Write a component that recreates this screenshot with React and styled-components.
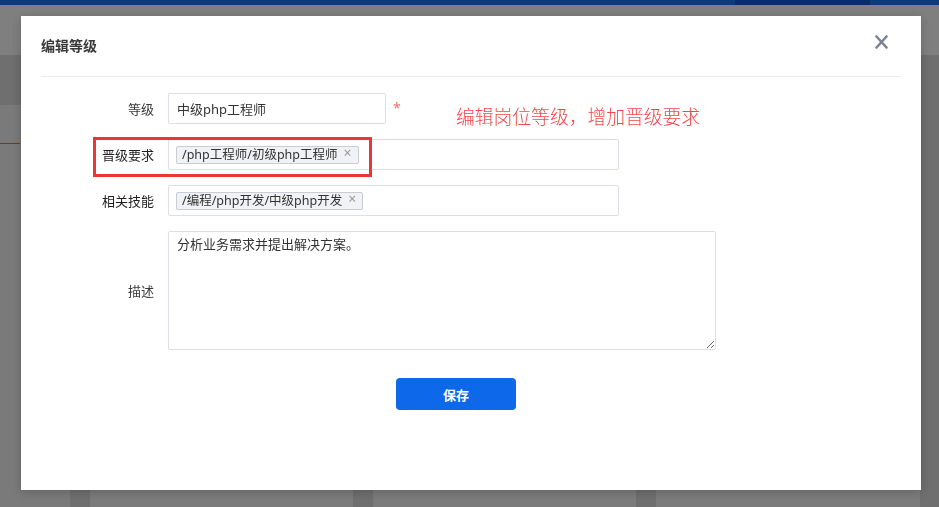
import React from "react";
import styled, { createGlobalStyle } from "styled-components";

const GlobalStyle = createGlobalStyle`
  html, body {
    margin: 0;
    padding: 0;
    width: 939px;
    height: 507px;
    overflow: hidden;
  }
  body {
    font-family: "Noto Sans", "Noto Sans CJK SC", sans-serif;
    color: #333;
  }
  * {
    box-sizing: border-box;
  }
`;

function App() {
  return (
    <>
      <GlobalStyle />
      <Page>
        <TopBar>
          <TopBarAccent />
        </TopBar>
        <Header />
        <Main>
          <Sidebar>
            <SideTabs />
            <SideMenu>
              <ActiveLine />
            </SideMenu>
          </Sidebar>
          <Content>
            <CardRow>
              <Card />
              <Card />
              <Card />
            </CardRow>
          </Content>
        </Main>
      </Page>

      <Overlay>
        <Dialog>
          <DialogHeader>
            <Title>编辑等级</Title>
            <CloseButton>
              <svg width="13" height="14" viewBox="0 0 13 14">
                <path
                  d="M1.5 1.5 L11.5 12.5 M11.5 1.5 L1.5 12.5"
                  stroke="#7c8394"
                  strokeWidth="2.6"
                  strokeLinecap="round"
                />
              </svg>
            </CloseButton>
          </DialogHeader>

          <Form>
            <Row>
              <Label>等级</Label>
              <Field $width={218}>中级php工程师</Field>
              <Required>*</Required>
            </Row>
            <Row>
              <Label $strong>晋级要求</Label>
              <TagField $width={451}>
                <Tag>
                  /php工程师/初级php工程师
                  <TagClose>×</TagClose>
                </Tag>
              </TagField>
            </Row>
            <Row>
              <Label $strong>相关技能</Label>
              <TagField $width={451}>
                <Tag>
                  /编程/php开发/中级php开发
                  <TagClose>×</TagClose>
                </Tag>
              </TagField>
            </Row>
            <Row>
              <Label>描述</Label>
              <TextArea readOnly defaultValue="分析业务需求并提出解决方案。" />
            </Row>
          </Form>

          <Footer>
            <SaveButton>保存</SaveButton>
          </Footer>

          <MarkBox />
          <MarkNote>编辑岗位等级，增加晋级要求</MarkNote>
        </Dialog>
      </Overlay>
    </>
  );
}

export default App;

/* page behind the modal */

const Page = styled.div`
  width: 939px;
  height: 507px;
  display: flex;
  flex-direction: column;
  background: #dedede;
`;

const TopBar = styled.div`
  height: 5px;
  background: #1a74f2;
  display: flex;
  justify-content: flex-end;
  padding-right: 69px;
`;

const TopBarAccent = styled.div`
  width: 135px;
  height: 100%;
  background: #0f58d0;
`;

const Header = styled.div`
  height: 50px;
  background: #fff;
`;

const Main = styled.div`
  flex: 1;
  display: flex;
`;

const Sidebar = styled.div`
  width: 71px;
  display: flex;
  flex-direction: column;
`;

const SideTabs = styled.div`
  height: 50px;
  background: #dedede;
`;

const SideMenu = styled.div`
  flex: 1;
  background: #f5f5f5;
  padding-top: 38px;
`;

const ActiveLine = styled.div`
  width: 20px;
  height: 1px;
  background: #e07a2a;
`;

const Content = styled.div`
  flex: 1;
  display: flex;
  flex-direction: column;
  justify-content: flex-end;
  padding: 0 19px 0 20px;
`;

const CardRow = styled.div`
  height: 330px;
  display: grid;
  grid-template-columns: 263px 263px 264px;
  gap: 20px;
`;

const Card = styled.div`
  background: #f6f6f6;
`;

/* modal */

const Overlay = styled.div`
  position: fixed;
  inset: 0;
  background: rgba(0, 0, 0, 0.5);
  padding: 16px 0 0 21px;
`;

const Dialog = styled.div`
  position: relative;
  width: 900px;
  height: 474px;
  background: #fff;
  box-shadow: 0 2px 10px rgba(0, 0, 0, 0.2);
`;

const DialogHeader = styled.div`
  height: 61px;
  margin: 0 20px;
  padding-top: 19px;
  border-bottom: 1px solid #ececec;
  display: flex;
  justify-content: space-between;
  align-items: flex-start;
`;

const Title = styled.div`
  margin-top: 1px;
  font-size: 14px;
  line-height: 20px;
  font-weight: bold;
  color: #3a3a3a;
`;

const CloseButton = styled.div`
  width: 13px;
  height: 14px;
  margin-right: 13px;
  display: flex;
  cursor: pointer;
`;

const Form = styled.div`
  padding: 16px 20px 0;
  display: flex;
  flex-direction: column;
  gap: 15px;
`;

const Row = styled.div`
  display: flex;
  align-items: center;
  gap: 14px;
`;

const Label = styled.div`
  width: 113px;
  text-align: right;
  font-size: 13px;
  color: ${(p) => (p.$strong ? "#1f1f1f" : "#3a3a3a")};
`;

const Field = styled.div`
  width: ${(p) => p.$width}px;
  height: 31px;
  border: 1px solid #dcdfe6;
  border-radius: 2px;
  padding: 0 8px;
  display: flex;
  align-items: center;
  font-size: 13px;
  color: #333;
`;

const TagField = styled(Field)`
  padding: 0 7px;
`;

const Required = styled.span`
  margin-left: -7px;
  margin-top: -2px;
  font-size: 14px;
  color: #f56c6c;
`;

const Tag = styled.span`
  height: 18px;
  padding: 0 6px 0 5px;
  display: inline-flex;
  align-items: center;
  background: #f0f2f5;
  border: 1px solid #c8ccd4;
  border-radius: 2px;
  font-size: 12.5px;
  line-height: 16px;
  color: #333;
`;

const TagClose = styled.span`
  margin-left: 6px;
  font-size: 14px;
  line-height: 12px;
  color: #999;
  margin-top: -3px;
`;

const TextArea = styled.textarea`
  width: 548px;
  height: 119px;
  border: 1px solid #dcdfe6;
  border-radius: 2px;
  padding: 3px 8px;
  font-family: "Noto Sans", "Noto Sans CJK SC", sans-serif;
  font-size: 13px;
  line-height: 18px;
  color: #333;
  resize: both;
  outline: none;
`;

const Footer = styled.div`
  padding: 28px 30px 0 0;
  display: flex;
  justify-content: center;
`;

const SaveButton = styled.button`
  width: 120px;
  height: 32px;
  border: none;
  border-radius: 4px;
  background: #0e68ea;
  color: #fff;
  font-family: "Noto Sans", "Noto Sans CJK SC", sans-serif;
  font-size: 13px;
  font-weight: bold;
  cursor: pointer;
`;

/* red annotation drawn over the screenshot */

const MarkBox = styled.div`
  position: absolute;
  left: 72px;
  top: 121px;
  width: 279px;
  height: 40px;
  border: 3px solid #ee3535;
`;

const MarkNote = styled.div`
  position: absolute;
  left: 435px;
  top: 91px;
  font-size: 18.8px;
  line-height: 20px;
  font-weight: 300;
  color: #f2474a;
  white-space: nowrap;
`;
